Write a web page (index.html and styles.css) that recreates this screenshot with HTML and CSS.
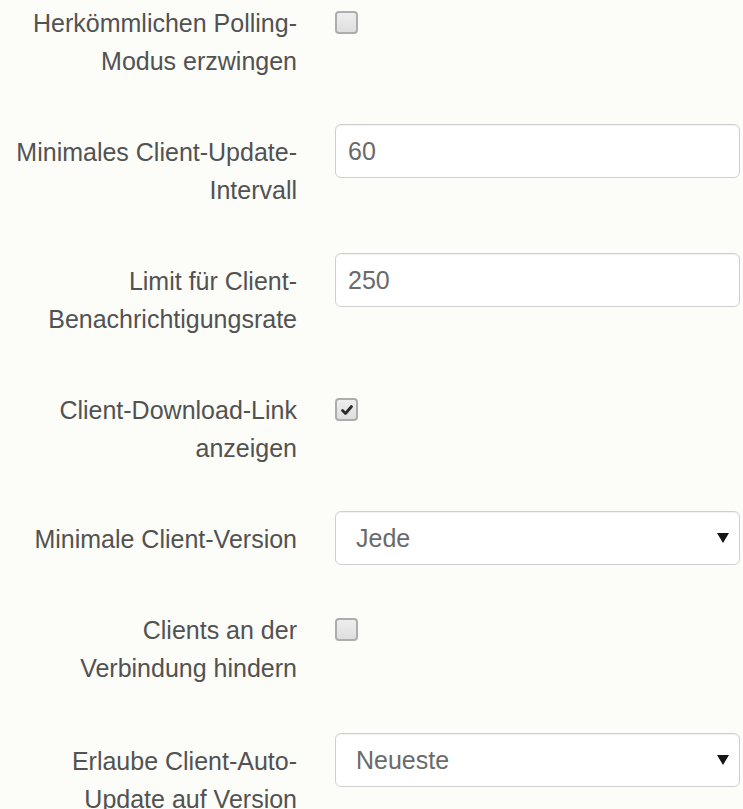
FILE: index.html
```html
<!DOCTYPE html>
<html lang="de">
<head>
    <meta charset="UTF-8">
    <meta name="viewport" content="width=device-width, initial-scale=1.0">
    <title>Client-Einstellungen</title>
    <link rel="stylesheet" href="styles.css">
</head>
<body>

<form class="settings-form">
    <!-- Polling -->
    <div class="form-row">
        <label class="row-label" for="legacyPolling">Herkömmlichen Polling-<br>Modus erzwingen</label>
        <label class="check">
            <input type="checkbox" id="legacyPolling" name="legacyPolling">
            <span class="check-box"><svg viewBox="0 0 14 14" width="14" height="14"><path d="M2.5 7.5 L5.5 10.5 L11.5 3.5" /></svg></span>
        </label>
    </div>

    <div class="form-row">
        <label class="row-label" for="minInterval">Minimales Client-Update-<br>Intervall</label>
        <input class="text-field" type="text" id="minInterval" name="minInterval" value="60">
    </div>

    <div class="form-row">
        <label class="row-label" for="notifyLimit">Limit für Client-<br>Benachrichtigungsrate</label>
        <input class="text-field" type="text" id="notifyLimit" name="notifyLimit" value="250">
    </div>

    <!-- Client -->
    <div class="form-row">
        <label class="row-label" for="downloadLink">Client-Download-Link<br>anzeigen</label>
        <label class="check">
            <input type="checkbox" id="downloadLink" name="downloadLink" checked>
            <span class="check-box"><svg viewBox="0 0 14 14" width="14" height="14"><path d="M2.5 7.5 L5.5 10.5 L11.5 3.5" /></svg></span>
        </label>
    </div>

    <div class="form-row form-row-single">
        <label class="row-label" for="minVersion">Minimale Client-Version</label>
        <div class="select-wrap">
            <select class="select-field" id="minVersion" name="minVersion">
                <option value="any">Jede</option>
            </select>
            <span class="select-arrow"></span>
        </div>
    </div>

    <div class="form-row form-row-wide">
        <label class="row-label" for="blockClients">Clients an der<br>Verbindung hindern</label>
        <label class="check">
            <input type="checkbox" id="blockClients" name="blockClients">
            <span class="check-box"><svg viewBox="0 0 14 14" width="14" height="14"><path d="M2.5 7.5 L5.5 10.5 L11.5 3.5" /></svg></span>
        </label>
    </div>

    <div class="form-row">
        <label class="row-label" for="autoUpdate">Erlaube Client-Auto-<br>Update auf Version</label>
        <div class="select-wrap">
            <select class="select-field" id="autoUpdate" name="autoUpdate">
                <option value="latest">Neueste</option>
            </select>
            <span class="select-arrow"></span>
        </div>
    </div>
</form>

</body>
</html>
```

FILE: styles.css
```css
body {
    margin: 0;
    background: #fcfcf8;
    font-family: 'Liberation Sans', Arial, sans-serif;
    font-size: 25px;
    color: #525252;
}
.settings-form {
    margin-top: -5px;
    width: 743px;
}
.form-row {
    display: grid;
    grid-template-columns: 297px 405px;
    column-gap: 38px;
    align-items: start;
    margin-bottom: 44px;
}
.form-row-single {
    margin-bottom: 37px;
}
.form-row-wide {
    margin-bottom: 46px;
}
.row-label {
    padding-top: 9px;
    line-height: 38px;
    text-align: right;
    white-space: nowrap;
}
.text-field,
.select-field {
    box-sizing: border-box;
    width: 405px;
    height: 54px;
    margin: 0;
    border: 1px solid #cfcfcf;
    border-radius: 6px;
    background: #fff;
    box-shadow: inset 0 1px 1px rgba(0, 0, 0, 0.06);
    font-family: inherit;
    font-size: 25px;
    color: #6a6a6a;
    outline: none;
}
.text-field {
    padding: 0 12px;
}
.select-field {
    appearance: none;
    -webkit-appearance: none;
    padding: 0 40px 0 20px;
}
.select-wrap {
    position: relative;
    width: 405px;
}
.select-arrow {
    position: absolute;
    right: 11px;
    top: 22px;
    width: 0;
    height: 0;
    border-left: 6px solid transparent;
    border-right: 6px solid transparent;
    border-top: 10px solid #151515;
}
.check {
    display: block;
    width: 23px;
    margin-top: 16px;
}
.check input {
    display: none;
}
.check-box {
    display: flex;
    align-items: center;
    justify-content: center;
    box-sizing: border-box;
    width: 23px;
    height: 23px;
    border: 2px solid #adadad;
    border-radius: 4px;
    background: linear-gradient(#eeeeee, #dedede);
}
.check-box svg {
    display: none;
    fill: none;
    stroke: #2b2b2b;
    stroke-width: 2.8;
    stroke-linecap: round;
    stroke-linejoin: round;
}
.check input:checked + .check-box svg {
    display: block;
}
```
